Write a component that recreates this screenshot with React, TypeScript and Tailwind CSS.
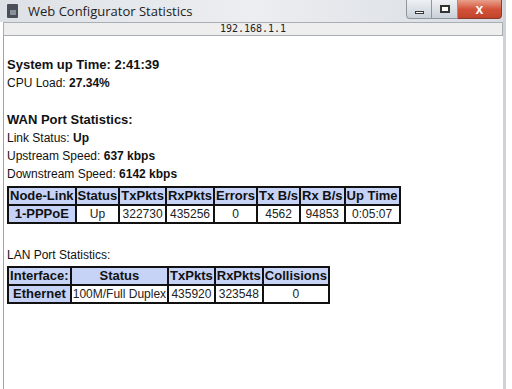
import React from "react";

const wanHead = ["Node-Link", "Status", "TxPkts", "RxPkts", "Errors", "Tx B/s", "Rx B/s", "Up Time"];
const wanRow = ["Up", "322730", "435256", "0", "4562", "94853", "0:05:07"];
const lanHead = ["Interface:", "Status", "TxPkts", "RxPkts", "Collisions"];
const lanRow = ["100M/Full Duplex", "435920", "323548", "0"];

function StatsTable({ head, label, row }: { head: string[]; label: string; row: string[] }) {
  return (
    <table className="border-collapse border-2 border-[#111] text-[12px] leading-[16px]">
      <thead>
        <tr>
          {head.map((h) => (
            <th key={h} className="border-2 border-[#111] bg-[#c6d3f7] px-[1px] text-[13px] font-bold text-[#111]">
              {h}
            </th>
          ))}
        </tr>
      </thead>
      <tbody>
        <tr>
          <td className="border-2 border-[#111] bg-[#c6d3f7] px-[4px] text-center text-[13px] font-bold">{label}</td>
          {row.map((c, i) => (
            <td key={i} className="border-2 border-[#111] bg-white px-[1px] text-center text-[#222]">
              {c}
            </td>
          ))}
        </tr>
      </tbody>
    </table>
  );
}

export default function App() {
  return (
    <div className="w-[512px] h-[389px] bg-white overflow-hidden" style={{ fontFamily: '"Liberation Sans", Arial, sans-serif' }}>
      <div className="w-[506px] h-full flex flex-col border-r-[3px] border-[#cfd3d8]">
        {/* title bar */}
        <div className="h-[22px] flex items-start bg-gradient-to-r from-[#dde1e6] via-[#eceef1] to-[#d8dce2] shrink-0">
          <div className="mt-[4px] ml-[7px] w-[11px] h-[14px] bg-[#4a4f57] rounded-[1px] flex items-end justify-center pb-[3px]">
            <div className="w-[6px] h-[5px] bg-[#8a9099]" />
          </div>
          <span className="ml-[10px] mt-[3px] text-[13px] leading-[16px] text-[#222]" style={{ fontFamily: '"Open Sans", "Liberation Sans", sans-serif' }}>
            Web Configurator Statistics
          </span>
          <div className="ml-auto flex mr-[1px]">
            <div className="w-[26px] h-[19px] border border-[#8e96a0] border-t-0 rounded-bl-[4px] bg-gradient-to-b from-[#eef1f4] to-[#c9d0d8] flex items-end justify-center pb-[4px]">
              <div className="w-[9px] h-[3px] border border-[#333] bg-white" />
            </div>
            <div className="w-[26px] h-[19px] border border-l-0 border-[#8e96a0] border-t-0 bg-gradient-to-b from-[#eef1f4] to-[#c9d0d8] flex items-center justify-center">
              <div className="w-[10px] h-[8px] border-[2px] border-[#333] bg-white" />
            </div>
            <div className="w-[44px] h-[19px] border border-l-0 border-[#8a3a2c] border-t-0 rounded-br-[4px] bg-gradient-to-b from-[#e8a08c] via-[#d3533a] to-[#c2432b] flex items-center justify-center">
              <span className="text-white font-bold text-[14px] leading-none">x</span>
            </div>
          </div>
        </div>
        {/* address bar */}
        <div className="h-[14px] shrink-0 ml-[3px] border border-[#a9aeb4] bg-[#eeeeee] flex items-center justify-center leading-none text-[#222]" style={{ fontFamily: '"DejaVu Sans Mono", "Liberation Mono", monospace', fontSize: 10 }}>
          192.168.1.1
        </div>
        {/* content */}
        <div className="flex-1 ml-[3px] border-l border-[#9da3a9] pl-[3px] pt-[20px] text-[12px] text-[#111]">
          <div className="h-[18px] leading-[18px] text-[13px] font-bold">System up Time: 2:41:39</div>
          <div className="h-[18px] leading-[18px]">
            CPU Load: <b>27.34%</b>
          </div>
          <div className="h-[18px] leading-[18px] text-[13px] font-bold mt-[19px]">WAN Port Statistics:</div>
          <div className="h-[18px] leading-[18px]">
            Link Status: <b>Up</b>
          </div>
          <div className="h-[18px] leading-[18px]">
            Upstream Speed: <b>637 kbps</b>
          </div>
          <div className="h-[18px] leading-[18px]">
            Downstream Speed: <b>6142 kbps</b>
          </div>
          <div className="mt-[3px]">
            <StatsTable head={wanHead} label="1-PPPoE" row={wanRow} />
          </div>
          <div className="h-[18px] leading-[18px] mt-[22px]">LAN Port Statistics:</div>
          <div className="mt-[2px]">
            <StatsTable head={lanHead} label="Ethernet" row={lanRow} />
          </div>
        </div>
      </div>
    </div>
  );
}
